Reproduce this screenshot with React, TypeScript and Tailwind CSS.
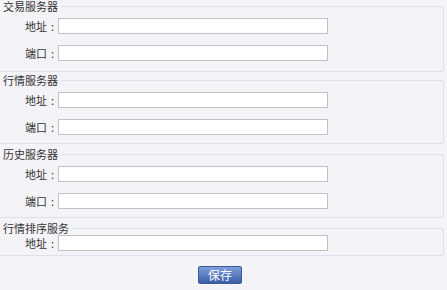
import React from "react";

const font = { fontFamily: '"Noto Sans CJK SC", "Noto Sans", sans-serif' };

function Row({ label, className }: { label: string; className: string }) {
  return (
    <div className={"flex items-center " + className}>
      <div className="w-[58px] flex justify-end items-center text-[11px] leading-[16px] text-[#333]">
        <span>{label}</span>
        <span className="w-[11px] text-center">:</span>
      </div>
      <input
        type="text"
        className="w-[270px] h-[16px] border border-[#c2c2c2] bg-white outline-none"
      />
    </div>
  );
}

function Group({
  title,
  className,
  children,
}: {
  title: string;
  className: string;
  children: React.ReactNode;
}) {
  return (
    <fieldset
      className={
        "w-[444px] border border-l-0 border-[#dce2ea] rounded-r-[3px] " + className
      }
    >
      <legend className="px-[3px] text-[11px] leading-[13px] text-[#333]">{title}</legend>
      {children}
    </fieldset>
  );
}

export default function App() {
  return (
    <div className="w-[447px] h-[290px] bg-[#f3f3f8] overflow-hidden" style={font}>
      <Group title="交易服务器" className="pb-[10px]">
        <Row label="地址" className="mt-[5px]" />
        <Row label="端口" className="mt-[11px]" />
      </Group>
      <Group title="行情服务器" className="mt-[2px] pb-[8px]">
        <Row label="地址" className="mt-[5px]" />
        <Row label="端口" className="mt-[11px]" />
      </Group>
      <Group title="历史服务器" className="mt-[4px] pb-[8px]">
        <Row label="地址" className="mt-[5px]" />
        <Row label="端口" className="mt-[11px]" />
      </Group>
      <Group title="行情排序服务" className="mt-[4px] pb-[4px]">
        <Row label="地址" className="mt-0" />
      </Group>
      <div className="mt-[10px] pl-[198px]">
        <button className="w-[44px] h-[18px] rounded-[2px] border border-[#3a5a9c] bg-gradient-to-b from-[#7e9ed9] to-[#3c5ea6] text-white text-[12px] leading-[16px] flex items-center justify-center">
          保存
        </button>
      </div>
    </div>
  );
}
